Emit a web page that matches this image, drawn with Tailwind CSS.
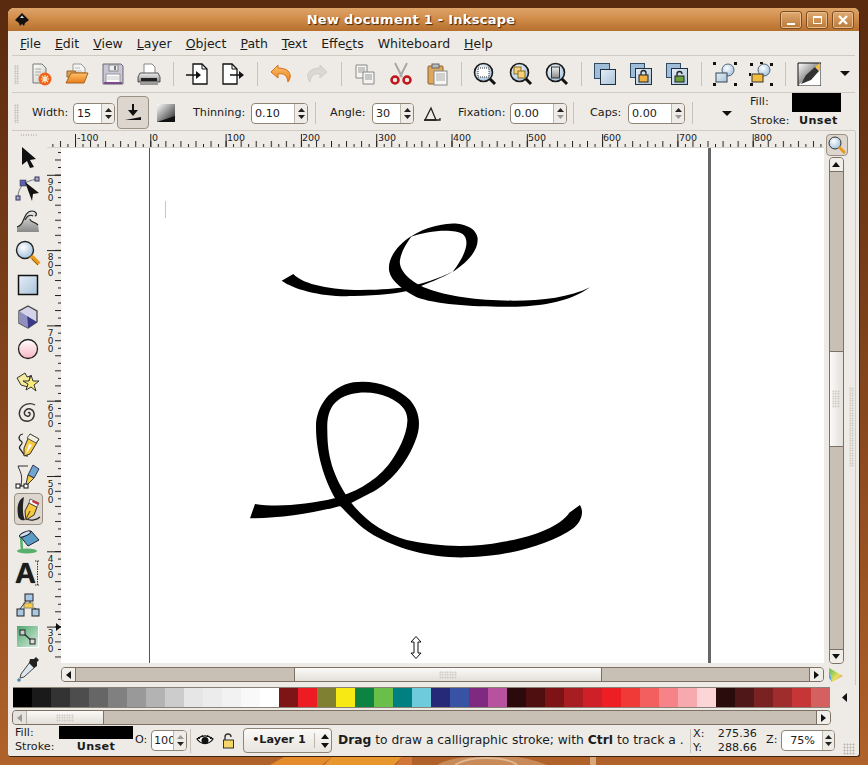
<!DOCTYPE html>
<html><head><meta charset="utf-8">
<script src="https://cdn.jsdelivr.net/npm/@tailwindcss/browser@4"></script>
</head>
<body class="m-0 overflow-hidden">
<svg class="absolute w-0 h-0"><defs>
<linearGradient id="pg" x1="0" y1="0" x2="1" y2="1"><stop offset="0" stop-color="#fff"/><stop offset="1" stop-color="#c9c9c4"/></linearGradient>
<linearGradient id="blu" x1="0" y1="0" x2="1" y2="1"><stop offset="0" stop-color="#e6eef5"/><stop offset="1" stop-color="#a9c3da"/></linearGradient>
<linearGradient id="org" x1="0" y1="0" x2="0" y2="1"><stop offset="0" stop-color="#fbc26a"/><stop offset="1" stop-color="#ea7d1c"/></linearGradient>
<linearGradient id="gry" x1="0" y1="0" x2="0" y2="1"><stop offset="0" stop-color="#efefef"/><stop offset="1" stop-color="#8a8a8a"/></linearGradient>
<linearGradient id="blk" x1="0" y1="0" x2="1" y2="1"><stop offset="0" stop-color="#fff"/><stop offset="1" stop-color="#222"/></linearGradient>
<linearGradient id="grn" x1="0" y1="0" x2="1" y2="1"><stop offset="0" stop-color="#4fa86e"/><stop offset="1" stop-color="#d6ecdc"/></linearGradient>
<radialGradient id="lens" cx=".4" cy=".35" r=".7"><stop offset="0" stop-color="#fff"/><stop offset="1" stop-color="#9fbfdc"/></radialGradient>
<linearGradient id="pink" x1="0" y1="0" x2="0" y2="1"><stop offset="0" stop-color="#fff"/><stop offset="1" stop-color="#f7b6c2"/></linearGradient>
<g id="mag"><circle cx="10.500" cy="10.500" r="9" fill="url(#lens)" stroke="#1a1a1a" stroke-width="1.600"/><path d="M17 17l5 5" stroke="#111" stroke-width="3"/></g>
</defs></svg>

<div class="relative w-[868px] h-[765px] overflow-hidden pl-[8px] pt-[8px] bg-linear-to-b from-[#5a2a0e] to-[#b0622a] font-['DejaVu_Sans',sans-serif] text-[#1c1c1c]">
<svg class="absolute left-0 top-[757px]" width="868" height="8"><path d="M270 8L284 0h48l-10 8z" fill="#e48c2c"/><path d="M332 0h70l-8 8h-70z" fill="#e8962e"/><path d="M402 0h10v8h-16z" fill="#d2773a"/><path d="M437 8c10-6 24-8 40-8h40c14 2 22 5 30 8z" fill="#c98a5a"/><path d="M455 8c8-5 18-7 30-7s26 2 32 7" fill="none" stroke="#e0b78f" stroke-width="2"/><rect x="590" y="0" width="6" height="8" fill="#d9a77c"/></svg>

<div class="relative w-[852px] h-[749px] bg-[#eeebe6] rounded-t-[6px] rounded-b-[3px] overflow-hidden flex flex-col border-r border-b border-[#3a2410]">
  <!-- title bar -->
  <div class="h-[23px] shrink-0 flex items-center bg-linear-to-b from-[#dfa468] via-[#cf8a48] to-[#b5702e] pl-[5px] pr-[5px] relative">
    <svg width="16" height="16" viewBox="0 0 16 16" class="ml-[1px]"><path d="M8 1L15 8 11 11 10 14 8 12 6 14 5 11 1 8z" fill="#111"/><path d="M6 6h4L8 3.500z" fill="#ddd"/></svg>
    <div class="flex-1 text-center text-white font-bold text-[13px] tracking-[.25px] [text-shadow:1px_1px_1px_#3d2208] pl-[12px]">New document 1 - Inkscape</div>
    <div class="flex gap-[4px] pt-[1px]">
      <div class="w-[22px] h-[18px] border border-[#7e4d20] rounded-[3px] bg-linear-to-b from-[#e0aa70] to-[#b97a38] flex items-end justify-center pb-[3px] shadow-[inset_0_0_0_1px_#e6bd90]"><div class="w-[8px] h-[2px] bg-white"></div></div>
      <div class="w-[22px] h-[18px] border border-[#7e4d20] rounded-[3px] bg-linear-to-b from-[#e0aa70] to-[#b97a38] flex items-center justify-center shadow-[inset_0_0_0_1px_#e6bd90]"><div class="w-[9px] h-[8px] border border-white border-t-2"></div></div>
      <div class="w-[22px] h-[18px] border border-[#7e4d20] rounded-[3px] bg-linear-to-b from-[#e0aa70] to-[#b97a38] flex items-center justify-center shadow-[inset_0_0_0_1px_#e6bd90]"><svg width="10" height="10"><path d="M1 1l8 8M9 1l-8 8" stroke="#fff" stroke-width="2.200"/></svg></div>
    </div>
  </div>
  <!-- menu bar -->
  <div class="h-[25px] shrink-0 mx-[4px] flex items-center text-[12.500px] gap-[14px] pl-[8px] border-b border-[#cfcac2] pt-[2px]">
    <span><u>F</u>ile</span><span><u>E</u>dit</span><span><u>V</u>iew</span><span><u>L</u>ayer</span><span><u>O</u>bject</span><span><u>P</u>ath</span><span><u>T</u>ext</span><span>Effe<u>c</u>ts</span><span>Whiteboard</span><span><u>H</u>elp</span>
  </div>
  <!-- command bar -->
  <div class="h-[37px] shrink-0 mx-[4px] flex items-center border-b border-[#cfcac2] [&>svg]:mx-[6px] [&>svg]:shrink-0">
    <div class="w-[5px] h-[19px] ml-[2px] mr-[4px] bg-[radial-gradient(#bdb8ae_45%,transparent_50%)] bg-[length:2.500px_2.500px] shrink-0"></div>
    <svg width="24" height="24"><path d="M4 2h9l4 4v15H4z" fill="url(#pg)" stroke="#777"/><path d="M6 7h6M6 10h6M6 13h4" stroke="#aaa"/><circle cx="16" cy="17" r="6.500" fill="#f0641a"/><path d="M16 13v8M12 17h8M13 14l6 6M19 14l-6 6" stroke="#ffe6c4" stroke-width="1.200"/></svg>
    <svg width="24" height="24"><path d="M8 2h8l4 4v9H8z" fill="#f4f4f2" stroke="#999"/><path d="M10 6h5M10 9h7" stroke="#bbb"/><path d="M2 9h8l2 2h9v4H2z" fill="#d9a05f" stroke="#9a6320"/><path d="M1 21h18l4-10H6z" fill="url(#org)" stroke="#a8631a"/></svg>
    <svg width="24" height="24"><path d="M2 2h18l2 2v18H2z" fill="#c9c6d6" stroke="#6b6a78"/><rect x="8" y="3" width="9" height="6" fill="#eee" stroke="#888"/><rect x="13" y="4" width="2" height="4" fill="#777"/><rect x="5" y="12" width="14" height="10" fill="#fbfbfb" stroke="#999"/><path d="M6 15h12M6 17h12" stroke="#ccc"/><path d="M3 21h18" stroke="#7c4a8a" stroke-width="2"/></svg>
    <svg width="24" height="24"><path d="M7 2h8l3 3v8H7z" fill="#fff" stroke="#888"/><path d="M3 11h18l2 4v5H1v-5z" fill="url(#gry)" stroke="#555"/><rect x="4" y="16" width="16" height="3" fill="#222"/><path d="M3 21h18v2H3z" fill="#999"/></svg>
    <div class="w-[1px] h-[24px] mx-[5.500px] bg-[#c8c3ba] shrink-0"></div>
    <svg width="24" height="24"><path d="M8 2h9l5 5v15H8z" fill="#fff" stroke="#111" stroke-width="1.300"/><path d="M17 2v5h5" fill="none" stroke="#111"/><path d="M1 13h14" stroke="#111" stroke-width="1.300"/><path d="M11 9l5 4-5 4z" fill="#111"/></svg>
    <svg width="24" height="24"><path d="M2 2h9l5 5v15H2z" fill="#fff" stroke="#111" stroke-width="1.300"/><path d="M11 2v5h5" fill="none" stroke="#111"/><path d="M9 13h11" stroke="#111" stroke-width="1.300"/><path d="M18 9l5 4-5 4z" fill="#111"/></svg>
    <div class="w-[1px] h-[24px] mx-[5.500px] bg-[#c8c3ba] shrink-0"></div>
    <svg width="24" height="24"><path d="M9 3L2 10l7 6v-4c6-1 9 1 10 8 3-4 3-8 0-11-2-2-6-3-10-3z" fill="url(#org)" stroke="#d9701a"/></svg>
    <svg width="24" height="24"><path d="M15 3l7 7-7 6v-4C9 11 6 13 5 20c-3-4-3-8 0-11 2-2 6-3 10-3z" fill="#dbd8d3" stroke="#cfccc7"/></svg>
    <div class="w-[1px] h-[24px] mx-[5.500px] bg-[#c8c3ba] shrink-0"></div>
    <svg width="24" height="24"><path d="M3 3h11v13H3z" fill="#f4f4f2" stroke="#888"/><path d="M5 6h7M5 8h7M5 10h7" stroke="#999"/><path d="M10 10h11v12H10z" fill="#f4f4f2" stroke="#888"/><path d="M12 13h7M12 15h7M12 17h7" stroke="#999"/></svg>
    <svg width="24" height="24"><path d="M6 1l7 14M18 1l-7 14" stroke="#a8a8a8" stroke-width="2"/><circle cx="6" cy="18" r="3.500" fill="none" stroke="#c0131a" stroke-width="2.500"/><circle cx="18" cy="18" r="3.500" fill="none" stroke="#c0131a" stroke-width="2.500"/></svg>
    <svg width="24" height="24"><rect x="3" y="4" width="15" height="18" rx="1" fill="#dda75e" stroke="#8a6324"/><rect x="7" y="2" width="7" height="4" fill="#bbb" stroke="#666"/><rect x="9" y="9" width="13" height="14" fill="#f6f6f4" stroke="#888"/><path d="M11 12h9M11 14h9M11 16h9M11 18h9" stroke="#aaa"/></svg>
    <div class="w-[1px] h-[24px] mx-[5.500px] bg-[#c8c3ba] shrink-0"></div>
    <svg width="24" height="24"><use href="#mag"/><rect x="5" y="6" width="11" height="9" fill="#fff" stroke="#333" stroke-dasharray="1 1"/></svg>
    <svg width="24" height="24"><use href="#mag"/><rect x="5" y="5" width="7" height="7" fill="#f6d27c" stroke="#8a6a20"/><rect x="9" y="9" width="7" height="7" fill="#f6d27c" stroke="#8a6a20"/></svg>
    <svg width="24" height="24"><use href="#mag"/><rect x="6.500" y="5" width="8" height="11" fill="url(#gry)" stroke="#333"/></svg>
    <div class="w-[1px] h-[24px] mx-[5.500px] bg-[#c8c3ba] shrink-0"></div>
    <svg width="24" height="24"><rect x="1.500" y="1.500" width="15" height="15" fill="#9fbcd8" stroke="#2f4c66"/><rect x="7.500" y="7.500" width="15" height="15" fill="url(#blu)" stroke="#1e2f40"/></svg>
    <svg width="24" height="24"><rect x="1.500" y="1.500" width="14" height="14" fill="#9fbcd8" stroke="#2f4c66"/><rect x="6.500" y="6.500" width="16" height="16" fill="url(#blu)" stroke="#1e2f40"/><rect x="10" y="13" width="9" height="7" fill="#f0b040" stroke="#222"/><path d="M12 13v-2a2.500 2.500 0 015 0v2" fill="none" stroke="#222" stroke-width="1.300"/></svg>
    <svg width="24" height="24"><rect x="1.500" y="1.500" width="14" height="14" fill="#9fbcd8" stroke="#2f4c66"/><rect x="6.500" y="6.500" width="16" height="16" fill="url(#blu)" stroke="#1e2f40"/><rect x="10" y="14" width="9" height="6" fill="#6aa03c" stroke="#222"/><path d="M12 14v-2a2.500 2.500 0 015 0" fill="none" stroke="#222" stroke-width="1.300"/></svg>
    <div class="w-[1px] h-[24px] mx-[5.500px] bg-[#c8c3ba] shrink-0"></div>
    <svg width="24" height="24"><circle cx="15" cy="8" r="6" fill="url(#lens)" stroke="#567"/><rect x="3" y="11" width="11" height="9" fill="url(#blu)" stroke="#345"/><path d="M0 0h3v3H0zM21 0h3v3h-3zM0 21h3v3H0zM21 21h3v3h-3z" fill="#111"/></svg>
    <svg width="24" height="24"><circle cx="15" cy="8" r="6" fill="url(#lens)" stroke="#567"/><rect x="3" y="12" width="11" height="8" fill="#f2bd3c" stroke="#333"/><path d="M1 1h3v3H1zM21 1h3v3h-3zM1 21h3v3H1zM21 21h3v3h-3zM11 0h3v2h-3zM0 11h2v3H0z" fill="#111"/></svg>
    <div class="w-[1px] h-[24px] mx-[5.500px] bg-[#c8c3ba] shrink-0"></div>
    <svg width="24" height="24"><path d="M1 1h23L1 24z" fill="url(#blk)"/><path d="M24 1v23H1z" fill="#fff"/><path d="M1 1h23v23H1z" fill="none" stroke="#111"/><path d="M4 22l5-9 9-8 4 4-8 9z" fill="#333"/><path d="M18 5l5-4v8z" fill="#f2bd3c"/></svg>
    <svg width="10" height="6" class="!ml-[13px]"><path d="M0 0h10L5 5z" fill="#111"/></svg>
  </div>
  <!-- tool controls -->
  <div class="h-[38px] shrink-0 mx-[4px] pt-[3px] flex items-center border-b border-[#cfcac2] text-[11.200px] relative">
    <div class="w-[5px] h-[19px] ml-[2px] mr-[13px] bg-[radial-gradient(#bdb8ae_45%,transparent_50%)] bg-[length:2.500px_2.500px] shrink-0"></div>
    <span class="w-[41px]">Width:</span>
    <div class="w-[42px] h-[21px] border border-[#8f8577] rounded-[4px] bg-white flex shrink-0"><span class="flex-1 pl-[3px] leading-[19px]">15</span><div class="w-[13px] bg-[#efece7] border-l border-[#bdb6ab] rounded-r-[3px] flex flex-col items-center justify-center gap-[3px]"><svg width="7" height="4"><path d="M0 4h7L3.500 0z" fill="#222"/></svg><svg width="7" height="4"><path d="M0 0h7L3.500 4z" fill="#222"/></svg></div></div>
    <div class="w-[32px] h-[33px] ml-[2px] mt-[-2px] border border-[#9a9084] rounded-[4px] bg-[#dcd6ce] flex items-center justify-center shrink-0"><svg width="18" height="18"><path d="M9 1v8" stroke="#111" stroke-width="2"/><path d="M4 7h10L9 13z" fill="#111"/><path d="M1 17l16-3v3z" fill="#111"/></svg></div>
    <svg width="18" height="18" class="ml-[8px] shrink-0"><rect width="18" height="18" fill="url(#blk)"/><path d="M0 18L18 12V18z" fill="#111"/></svg>
    <span class="ml-[18px] w-[58px]">Thinning:</span>
    <div class="w-[57px] h-[21px] border border-[#8f8577] rounded-[4px] bg-white flex shrink-0"><span class="flex-1 pl-[3px] leading-[19px]">0.10</span><div class="w-[13px] bg-[#efece7] border-l border-[#bdb6ab] rounded-r-[3px] flex flex-col items-center justify-center gap-[3px]"><svg width="7" height="4"><path d="M0 4h7L3.500 0z" fill="#222"/></svg><svg width="7" height="4"><path d="M0 0h7L3.500 4z" fill="#222"/></svg></div></div>
    <div class="w-[1px] h-[22px] ml-[7px] bg-[#c8c3ba]"></div>
    <span class="ml-[14px] w-[42px]">Angle:</span>
    <div class="w-[42px] h-[21px] border border-[#8f8577] rounded-[4px] bg-white flex shrink-0"><span class="flex-1 pl-[3px] leading-[19px]">30</span><div class="w-[13px] bg-[#efece7] border-l border-[#bdb6ab] rounded-r-[3px] flex flex-col items-center justify-center gap-[3px]"><svg width="7" height="4"><path d="M0 4h7L3.500 0z" fill="#222"/></svg><svg width="7" height="4"><path d="M0 0h7L3.500 4z" fill="#222"/></svg></div></div>
    <svg width="18" height="16" class="ml-[9px] shrink-0"><path d="M2 15L8 3l5 12z" fill="none" stroke="#222" stroke-width="1.300"/><path d="M1 15h16v-2" fill="none" stroke="#222" stroke-width="1.300"/></svg>
    <span class="ml-[17px] w-[52px]">Fixation:</span>
    <div class="w-[57px] h-[21px] border border-[#8f8577] rounded-[4px] bg-white flex shrink-0"><span class="flex-1 pl-[3px] leading-[19px]">0.00</span><div class="w-[13px] bg-[#efece7] border-l border-[#bdb6ab] rounded-r-[3px] flex flex-col items-center justify-center gap-[3px]"><svg width="7" height="4"><path d="M0 4h7L3.500 0z" fill="#222"/></svg><svg width="7" height="4"><path d="M0 0h7L3.500 4z" fill="#999"/></svg></div></div>
    <div class="w-[1px] h-[22px] ml-[6px] bg-[#c8c3ba]"></div>
    <span class="ml-[16px] w-[38px]">Caps:</span>
    <div class="w-[57px] h-[21px] border border-[#8f8577] rounded-[4px] bg-white flex shrink-0"><span class="flex-1 pl-[3px] leading-[19px]">0.00</span><div class="w-[13px] bg-[#efece7] border-l border-[#bdb6ab] rounded-r-[3px] flex flex-col items-center justify-center gap-[3px]"><svg width="7" height="4"><path d="M0 4h7L3.500 0z" fill="#222"/></svg><svg width="7" height="4"><path d="M0 0h7L3.500 4z" fill="#999"/></svg></div></div>
    <div class="w-[1px] h-[22px] ml-[7px] bg-[#c8c3ba]"></div>
    <svg width="10" height="5" class="ml-[29px] shrink-0"><path d="M0 0h10L5 5z" fill="#111"/></svg>
    <div class="ml-[18px] w-[96px] h-[37px] mt-[-3px] flex flex-col shrink-0">
      <div class="h-[19px] flex items-center"><span class="w-[42px]">Fill:</span><div class="w-[49px] h-[19px] bg-black"></div></div>
      <div class="h-[18px] flex items-center"><span class="w-[49px]">Stroke:</span><b class="font-bold tracking-[.4px]">Unset</b></div>
    </div>
  </div>
  <!-- main -->
  <div class="h-[554px] shrink-0 mx-[4px] flex">
    <div class="w-[35px] shrink-0 flex flex-col items-start">
      <div class="w-[18px] h-[5px] mt-[3px] mb-[5px] ml-[8px] bg-[radial-gradient(#bdb8ae_45%,transparent_50%)] bg-[length:2.500px_2.500px]"></div>
      <div class="flex flex-col [&>*]:shrink-0 w-[32px] items-center">
        <div class="h-[32px] flex items-center"><svg width="24" height="24"><path d="M6 2l14 12-6 1 4 7-4 1-3-7-5 4z" fill="#111"/></svg></div>
        <div class="h-[32px] flex items-center"><svg width="26" height="26"><path d="M3 22C3 10 10 5 22 3" fill="none" stroke="#777"/><rect x="5" y="4" width="6" height="6" fill="#5a5fae" stroke="#333" stroke-width=".5"/><rect x="20" y="1" width="4" height="4" fill="#aab" stroke="#336"/><rect x="1" y="20" width="4" height="4" fill="#aab" stroke="#336"/><path d="M10 6l14 11-6 1-1 7z" fill="#111"/></svg></div>
        <div class="h-[32px] flex items-center"><svg width="24" height="24"><path d="M1 23v-5c2-1 4-2 5-5 2-5 4-11 10-12 5 0 7 5 4 7-3 0-5-2-6 1-1 4 6 3 8 6l1 8z" fill="url(#gry)"/><path d="M1 18c3-1 5-3 6-6 2-5 4-10 9-10 4 0 6 4 3 5M9 11c2-4 5-6 8-4M14 10c0 3 5 3 8 6" fill="none" stroke="#222" stroke-width="1.100"/></svg></div>
        <div class="h-[32px] flex items-center"><svg width="26" height="26"><circle cx="10" cy="10" r="8.500" fill="url(#lens)" stroke="#222" stroke-width="1.400"/><path d="M16 16l8 8" stroke="#e99a1c" stroke-width="4.500"/><path d="M17 19l6 6" stroke="#8a5a10"/></svg></div>
        <div class="h-[32px] flex items-center"><svg width="22" height="22"><rect x="1.500" y="1.500" width="19" height="19" fill="url(#blu)" stroke="#111" stroke-width="1.500"/></svg></div>
        <div class="h-[32px] flex items-center"><svg width="24" height="24"><path d="M12 1l9 5v11l-9 6-9-5V6z" fill="#d4d4e8" stroke="#444" stroke-width="1.300"/><path d="M3 6l8 5 1 12-9-5z" fill="#8f8fc0"/><path d="M11 11l10 6-9 6z" fill="#3a3a86"/></svg></div>
        <div class="h-[32px] flex items-center"><svg width="22" height="22"><circle cx="11" cy="11" r="9.500" fill="url(#pink)" stroke="#222" stroke-width="1.300"/></svg></div>
        <div class="h-[32px] flex items-center"><svg width="24" height="24"><path d="M1 9l8-5 2 4 3-1-2 11-7-2z" fill="#f4ea9c" stroke="#333"/><path d="M15 6l2 6 6 0-5 4 2 6-5-4-5 3 2-6-5-3h6z" fill="#f7ec7a" stroke="#333"/></svg></div>
        <div class="h-[32px] flex items-center"><svg width="24" height="24"><path d="M12 12c2-2 3 2 1 3-3 1-6-2-4-5 3-4 8-2 9 2 1 5-3 9-8 8-5 0-8-6-6-11 3-6 10-8 15-5" fill="none" stroke="#333" stroke-width="1.400"/></svg></div>
        <div class="h-[32px] flex items-center"><svg width="24" height="26"><path d="M7 2C4 2 1 6 5 9s-4 5-1 8 3 7 8 7" fill="none" stroke="#222" stroke-width="1.200"/><path d="M14 2l9 5-9 15-6 2 0-8z" fill="#f7c93e" stroke="#333"/><path d="M14 2l9 5-3 4-9-5z" fill="#f4f0e0" stroke="#555"/><path d="M10 22l3-10 3 1z" fill="#fff"/></svg></div>
        <div class="h-[32px] flex items-center"><svg width="26" height="26"><path d="M3 2h10M3 2c2 6 5 8 3 20" fill="none" stroke="#333"/><rect x="1" y="20" width="4" height="4" fill="#fff" stroke="#111"/><rect x="9" y="20" width="4" height="4" fill="#fff" stroke="#111"/><path d="M5 22h4" stroke="#111"/><path d="M18 1l6 4-5 9-6-3z" fill="#6fa5cf" stroke="#335"/><path d="M13 11l6 3-6 6-2 0z" fill="#f5cc44" stroke="#333"/></svg></div>
        <div class="h-[32px] flex items-center justify-center w-[29px] border border-[#9a9084] rounded-[4px] bg-[#dcd6ce] box-border"><svg width="27" height="27"><path d="M9 1c-7 3-7 13-6 18 0 4 4 6 7 5-2-4-3-11-1-23z" fill="#222"/><path d="M25 21c-3 3-9 4-14 2" fill="none" stroke="#222" stroke-width="1.200"/><path d="M14 7l8 4-3 8-8 5-1-9z" fill="#f7c93e" stroke="#333"/><path d="M15 3l9 4-2 4-8-4z" fill="#fff" stroke="#333" stroke-width=".7"/><path d="M18 4l6 3-1 2-6-3z" fill="#c8323a"/><path d="M11 23l4-8" stroke="#333"/></svg></div>
        <div class="h-[32px] flex items-center"><svg width="26" height="26"><ellipse cx="12" cy="23" rx="10" ry="2.500" fill="#56b06c"/><path d="M6 8l1 14" stroke="#56b06c" stroke-width="2.500"/><path d="M5 8l11-5 8 9-11 6z" fill="#5a9dc4" stroke="#223"/><ellipse cx="10" cy="6" rx="6" ry="2" transform="rotate(-25 10 6)" fill="#cfe2ee" stroke="#223"/></svg></div>
        <div class="h-[32px] flex items-center"><span class="font-['Liberation_Sans',sans-serif] font-bold text-[29px] leading-none [text-shadow:0_0_1px_#111]">A</span><svg width="6" height="26" class="ml-[-1px]"><path d="M0 1h5M2.500 1v24M0 25h5" stroke="#333" stroke-dasharray="1.500 1"/></svg></div>
        <div class="h-[32px] flex items-center"><svg width="24" height="24"><rect x="9" y="1" width="8" height="7" fill="#a9c8e4" stroke="#222"/><rect x="8" y="10" width="9" height="5" fill="#f5cc44" stroke="#888"/><rect x="1" y="16" width="7" height="7" fill="#a9c8e4" stroke="#222"/><rect x="16" y="16" width="7" height="7" fill="#a9c8e4" stroke="#222"/><path d="M10 8L4 16M14 8v2M18 15l2 1" stroke="#333"/></svg></div>
        <div class="h-[32px] flex items-center"><svg width="22" height="22"><rect width="22" height="22" fill="#fff"/><rect x="0" y="0" width="21" height="21" fill="url(#grn)"/><path d="M5 6l11 10" stroke="#333" stroke-width="1.500"/><rect x="3" y="4" width="5" height="5" fill="#ccc" stroke="#222"/><rect x="13" y="13" width="5" height="5" fill="#ddd" stroke="#222"/></svg></div>
        <div class="h-[32px] flex items-center"><svg width="24" height="26"><path d="M14 6l5 5L8 21l-4 1 1-4z" fill="#dce6ee" stroke="#444"/><path d="M13 7l5 5 3-2 0-4 2-2-3-3-2 2-4 0z" fill="#222"/><circle cx="3" cy="24" r="1.800" fill="#4a86b4"/></svg></div>
      </div>
    </div>
    <div class="w-[777px] shrink-0 flex flex-col">
      <!-- horizontal ruler -->
      <svg width="777" height="17" class="shrink-0 font-['DejaVu_Sans',sans-serif]">
        <defs><pattern id="hr" patternUnits="userSpaceOnUse" x="28" y="0" width="15.060" height="17"><rect x="0" y="10" width="1" height="6" fill="#222"/><rect x="7.500" y="13" width="1" height="3" fill="#222"/></pattern>
        <pattern id="hm" patternUnits="userSpaceOnUse" x="28" y="0" width="75.300" height="17"><rect x="0" y="3" width="1" height="14" fill="#222"/></pattern></defs>
        <rect width="777" height="17" fill="url(#hr)"/><rect width="777" height="17" fill="url(#hm)"/>
        <rect y="16" width="777" height="1" fill="#d8d3cb"/>
        <g font-size="9.500" fill="#222"><text x="30" y="10">-100</text><text x="105" y="10">0</text><text x="180" y="10">100</text><text x="255" y="10">200</text><text x="331" y="10">300</text><text x="406" y="10">400</text><text x="481" y="10">500</text><text x="556" y="10">600</text><text x="632" y="10">700</text><text x="707" y="10">800</text></g>
      </svg>
      <div class="h-[515px] shrink-0 flex">
        <svg width="14" height="515" class="shrink-0 font-['DejaVu_Sans',sans-serif]">
          <defs><pattern id="vr" patternUnits="userSpaceOnUse" x="0" y="11.500" width="14" height="15.060"><rect x="8" y="0" width="6" height="1" fill="#222"/><rect x="11" y="7.500" width="3" height="1" fill="#222"/></pattern>
          <pattern id="vm" patternUnits="userSpaceOnUse" x="0" y="26.800" width="14" height="75.300"><rect x="0" y="0" width="14" height="1" fill="#222"/></pattern></defs>
          <rect width="14" height="515" fill="url(#vr)"/><rect width="14" height="515" fill="url(#vm)"/>
          <g font-size="9" fill="#222" text-anchor="middle">
            <text x="3.500" y="37">9</text><text x="3.500" y="45">0</text><text x="3.500" y="53">0</text>
            <text x="3.500" y="112">8</text><text x="3.500" y="120">0</text><text x="3.500" y="128">0</text>
            <text x="3.500" y="188">7</text><text x="3.500" y="196">0</text><text x="3.500" y="204">0</text>
            <text x="3.500" y="263">6</text><text x="3.500" y="271">0</text><text x="3.500" y="279">0</text>
            <text x="3.500" y="339">5</text><text x="3.500" y="347">0</text><text x="3.500" y="355">0</text>
            <text x="3.500" y="414">4</text><text x="3.500" y="422">0</text><text x="3.500" y="430">0</text>
            <text x="3.500" y="488">3</text><text x="3.500" y="496">0</text><text x="3.500" y="504">0</text>
          </g>
          <path d="M9 475l5 4-5 4z" fill="#111"/>
        </svg>
        <!-- canvas: x 61..824, y 148..663 -->
        <svg width="763" height="515" viewBox="61 148 763 515" class="bg-white shrink-0">
          <rect x="149" y="148" width="1" height="515" fill="#555"/>
          <rect x="708" y="148" width="3" height="515" fill="#666"/>
          <rect x="165" y="201" width="1" height="17" fill="#c8c8c8"/>
          <g transform="translate(240 210) scale(.3333)">
            <path d="M125 212L160 192C190 225 280 240 360 240C430 240 470 235 495 232C545 222 600 205 640 183C610 203 560 222 510 240C480 250 420 256 340 258C250 262 165 240 125 212Z"/>
            <path d="M640 185C690 150 715 120 713 85C710 50 660 35 620 42C580 47 540 60 510 82C560 62 640 55 668 72C690 90 680 130 640 183Z"/>
            <path d="M515 78C470 105 440 150 448 185C455 215 490 240 530 262C590 285 720 292 830 290C910 288 990 275 1050 232C990 262 910 272 820 272C720 272 620 260 560 235C510 215 475 180 480 150C485 120 500 100 515 78Z"/>
          </g>
          <g transform="translate(240 370) scale(.3333)">
            <path fill-rule="nonzero" d="M45 402C110 412 200 405 283 385C340 368 400 340 445 285C475 245 500 195 502 155C505 120 480 98 445 82C400 62 335 62 295 90C270 108 260 140 262 180C262 240 270 300 318 375L335 400C375 450 430 490 500 510C590 530 690 535 790 515C880 500 960 470 988 428L1020 405C1035 430 1020 460 1000 475C930 525 800 560 680 562C570 565 470 535 400 495C350 465 320 425 300 408C260 350 228 260 228 170C228 110 270 50 340 37C400 28 470 50 510 90C540 125 545 170 525 215C500 280 450 340 390 370L335 398C250 425 130 445 30 445Z"/>
          </g>
          <g stroke="#111" fill="#fff" stroke-width="1"><path d="M416 636.500l5 5.500h-3v11h3l-5 5.500-5-5.500h3v-11h-3z"/></g>
        </svg>
      </div>
      <div class="h-[4px] shrink-0"></div>
      <!-- horizontal scrollbar -->
      <div class="h-[15px] shrink-0 ml-[14px] flex border border-[#7d7165] rounded-[4px] bg-[#c9c0b5] overflow-hidden">
        <div class="w-[14px] bg-[#f1eeea] border-r border-[#7d7165] flex items-center justify-center"><svg width="5" height="8"><path d="M5 0v8L0 4z" fill="#111"/></svg></div>
        <div class="w-[218px]"></div>
        <div class="w-[308px] bg-linear-to-b from-[#fbfaf8] to-[#e3dfd9] border-x border-[#7d7165] flex items-center justify-center"><div class="w-[18px] h-[8px] bg-[radial-gradient(#c8c3ba_45%,transparent_50%)] bg-[length:2.500px_2.500px]"></div></div>
        <div class="flex-1"></div>
        <div class="w-[14px] bg-[#f1eeea] border-l border-[#7d7165] flex items-center justify-center"><svg width="5" height="8"><path d="M0 0v8l5-4z" fill="#111"/></svg></div>
      </div>
    </div>
    <!-- right column -->
    <div class="w-[24px] shrink-0 flex flex-col items-center">
      <div class="w-[22px] h-[22px] mt-[3px] ml-[2px] border border-[#9a9084] rounded-[4px] bg-[#dcd6ce] flex items-center justify-center shrink-0"><svg width="18" height="18"><circle cx="7" cy="7" r="6" fill="url(#lens)" stroke="#333"/><path d="M11 11l6 6" stroke="#e99a1c" stroke-width="3"/></svg></div>
      <div class="w-[15px] h-[507px] mt-[1px] shrink-0 flex flex-col border border-[#7d7165] rounded-[4px] bg-[#c9c0b5] overflow-hidden">
        <div class="h-[14px] shrink-0 bg-[#f1eeea] border-b border-[#7d7165] flex items-center justify-center"><svg width="8" height="5"><path d="M0 5h8L4 0z" fill="#111"/></svg></div>
        <div class="h-[179px] shrink-0"></div>
        <div class="h-[96px] shrink-0 bg-linear-to-r from-[#fbfaf8] to-[#e3dfd9] border-y border-[#7d7165] flex items-center justify-center"><div class="w-[8px] h-[18px] bg-[radial-gradient(#c8c3ba_45%,transparent_50%)] bg-[length:2.500px_2.500px]"></div></div>
        <div class="flex-1"></div>
        <div class="h-[14px] shrink-0 bg-[#f1eeea] border-t border-[#7d7165] flex items-center justify-center"><svg width="8" height="5"><path d="M0 0h8L4 5z" fill="#111"/></svg></div>
      </div>
      <svg width="16" height="16" class="mt-[3px] shrink-0"><defs><linearGradient id="cw" x1="0" y1="0" x2="1" y2="1"><stop offset="0" stop-color="#55b85a"/><stop offset=".6" stop-color="#e8e05a"/><stop offset="1" stop-color="#d45aa8"/></linearGradient></defs><path d="M1 1l14 8-11 6z" fill="url(#cw)"/><path d="M1 1l3 14-3-4z" fill="#5aa8d4"/></svg>
    </div>
    <div class="w-[8px] shrink-0 flex flex-col items-center relative border-r border-[#cfcac2]">
      <div class="w-[5px] h-[80px] mt-[256px] bg-[radial-gradient(#c8c3ba_45%,transparent_50%)] bg-[length:2.500px_2.500px]"></div>
    </div>
  </div>
  <!-- palette -->
  <div class="h-[25px] shrink-0 mx-[4px] flex items-center">
    <div class="h-[21px] ml-[1px] flex border-y border-[#8a8177] shrink-0">
      <div class="w-[19px] bg-[#000000]"></div><div class="w-[19px] bg-[#1a1a1a]"></div><div class="w-[19px] bg-[#333333]"></div><div class="w-[19px] bg-[#4d4d4d]"></div><div class="w-[19px] bg-[#666666]"></div><div class="w-[19px] bg-[#808080]"></div><div class="w-[19px] bg-[#999999]"></div><div class="w-[19px] bg-[#b3b3b3]"></div><div class="w-[19px] bg-[#cccccc]"></div><div class="w-[19px] bg-[#e6e6e6]"></div><div class="w-[19px] bg-[#ececec]"></div><div class="w-[19px] bg-[#f2f2f2]"></div><div class="w-[19px] bg-[#f9f9f9]"></div><div class="w-[19px] bg-[#ffffff]"></div>
      <div class="w-[19px] bg-[#7f1416]"></div><div class="w-[19px] bg-[#ed1c24]"></div><div class="w-[19px] bg-[#808033]"></div><div class="w-[19px] bg-[#f7ea14]"></div><div class="w-[19px] bg-[#0c8340]"></div><div class="w-[19px] bg-[#6abf4b]"></div><div class="w-[19px] bg-[#008080]"></div><div class="w-[19px] bg-[#6ecbdc]"></div><div class="w-[19px] bg-[#262878]"></div><div class="w-[19px] bg-[#3953a4]"></div><div class="w-[19px] bg-[#7f2a80]"></div><div class="w-[19px] bg-[#b8519e]"></div>
      <div class="w-[19px] bg-[#2b0a0b]"></div><div class="w-[19px] bg-[#4f0e10]"></div><div class="w-[19px] bg-[#7d1315]"></div><div class="w-[19px] bg-[#a71d22]"></div><div class="w-[19px] bg-[#cf2027]"></div><div class="w-[19px] bg-[#ed1f24]"></div><div class="w-[19px] bg-[#f03a37]"></div><div class="w-[19px] bg-[#f35e5e]"></div><div class="w-[19px] bg-[#f58387]"></div><div class="w-[19px] bg-[#f8a9ad]"></div><div class="w-[19px] bg-[#fcd5d6]"></div>
      <div class="w-[19px] bg-[#2b0c0d]"></div><div class="w-[19px] bg-[#501718]"></div><div class="w-[19px] bg-[#7a2122]"></div><div class="w-[19px] bg-[#a02d2e]"></div><div class="w-[19px] bg-[#c73637]"></div><div class="w-[19px] bg-[#d46060]"></div>
    </div>
    <svg width="5" height="9" class="ml-[12px]"><path d="M5 0v9L0 4.500z" fill="#111"/></svg>
  </div>
  <!-- palette scrollbar -->
  <div class="h-[15px] shrink-0 ml-[4px] w-[819px] flex border border-[#7d7165] rounded-[4px] bg-[#c9c0b5] overflow-hidden">
    <div class="w-[14px] bg-[#e6e2dc] border-r border-[#b8b0a5] flex items-center justify-center"><svg width="5" height="8"><path d="M5 0v8L0 4z" fill="#999"/></svg></div>
    <div class="w-[77px] bg-linear-to-b from-[#fbfaf8] to-[#e3dfd9] border-r border-[#7d7165] flex items-center justify-center"><div class="w-[18px] h-[8px] bg-[radial-gradient(#c8c3ba_45%,transparent_50%)] bg-[length:2.500px_2.500px]"></div></div>
    <div class="flex-1"></div>
    <div class="w-[14px] bg-[#f1eeea] border-l border-[#7d7165] flex items-center justify-center"><svg width="5" height="8"><path d="M0 0v8l5-4z" fill="#111"/></svg></div>
  </div>
  <!-- status bar -->
  <div class="h-[31px] shrink-0 mx-[4px] flex text-[11.200px] items-center relative">
    <div class="w-[121px] h-[30px] shrink-0 flex flex-col pl-[3px]">
      <div class="h-[13px] flex leading-[13px]"><span class="w-[44px]">Fill:</span><div class="w-[74px] h-[13px] bg-black"></div></div>
      <div class="h-[17px] flex items-center"><span class="w-[44px]">Stroke:</span><b class="w-[74px] text-center font-bold tracking-[.4px]">Unset</b></div>
    </div>
    <span class="ml-[2px] w-[16px] text-[11.200px]">O:</span>
    <div class="w-[36px] h-[21px] border border-[#8f8577] rounded-[4px] bg-white flex shrink-0 overflow-hidden"><span class="w-[21px] overflow-hidden pl-[2px] leading-[19px] whitespace-nowrap">100</span><div class="w-[13px] bg-[#efece7] border-l border-[#bdb6ab] flex flex-col items-center justify-center gap-[3px]"><svg width="7" height="4"><path d="M0 4h7L3.500 0z" fill="#999"/></svg><svg width="7" height="4"><path d="M0 0h7L3.500 4z" fill="#222"/></svg></div></div>
    <div class="w-[1px] h-[24px] ml-[3px] bg-[#c8c3ba] shrink-0"></div>
    <svg width="18" height="14" class="ml-[5px] shrink-0"><path d="M1 5c5-4 11-4 16 0-4 6-12 6-16 0z" fill="#fff" stroke="#111" stroke-width="1.300"/><circle cx="9" cy="6.500" r="3.500" fill="#111"/><path d="M2 3l2 2M6 1l1 2M12 1l-1 2M16 3l-2 2" stroke="#111"/></svg>
    <svg width="14" height="18" class="ml-[8px] shrink-0"><path d="M3 8V5a3 3 0 016 0" fill="none" stroke="#333" stroke-width="1.400"/><rect x="1.500" y="8" width="10" height="8" fill="#f4d766" stroke="#333"/></svg>
    <div class="w-[89px] h-[25px] ml-[7px] border border-[#8f8577] rounded-[4px] bg-linear-to-b from-[#fbfaf8] to-[#e8e4de] flex items-center shrink-0"><b class="w-[70px] text-center font-bold">•Layer 1</b><div class="w-[1px] h-[15px] bg-[#bdb6ab]"></div><svg width="8" height="14" class="ml-[6px]"><path d="M0 5h8L4 0zM0 9h8l-4 5z" fill="#111"/></svg></div>
    <div class="w-[351px] ml-[6px] text-[12.300px] whitespace-nowrap overflow-hidden shrink-0"><b class="font-bold">Drag</b> to draw a calligraphic stroke; with <b class="font-bold">Ctrl</b> to track a .</div>
    <div class="w-[1px] h-[24px] ml-[1px] bg-[#c8c3ba] shrink-0"></div>
    <div class="w-[64px] ml-[2px] text-[11.200px] leading-[14px] shrink-0"><div class="flex justify-between"><span>X:</span><span>275.36</span></div><div class="flex justify-between"><span>Y:</span><span>288.66</span></div></div>
    <span class="ml-[9px] w-[15px] text-[11.200px]">Z:</span>
    <div class="w-[54px] h-[21px] border border-[#8f8577] rounded-[4px] bg-white flex shrink-0"><span class="flex-1 text-right pr-[7px] leading-[19px]">75%</span><div class="w-[12px] bg-[#efece7] border-l border-[#bdb6ab] rounded-r-[3px] flex flex-col items-center justify-center gap-[3px]"><svg width="7" height="4"><path d="M0 4h7L3.500 0z" fill="#222"/></svg><svg width="7" height="4"><path d="M0 0h7L3.500 4z" fill="#222"/></svg></div></div>
    <div class="absolute right-0 bottom-[1px] w-[12px] h-[12px] bg-[radial-gradient(#bdb8ae_45%,transparent_50%)] bg-[length:3px_3px]"></div>
  </div>
</div>
</div>
</body></html>
